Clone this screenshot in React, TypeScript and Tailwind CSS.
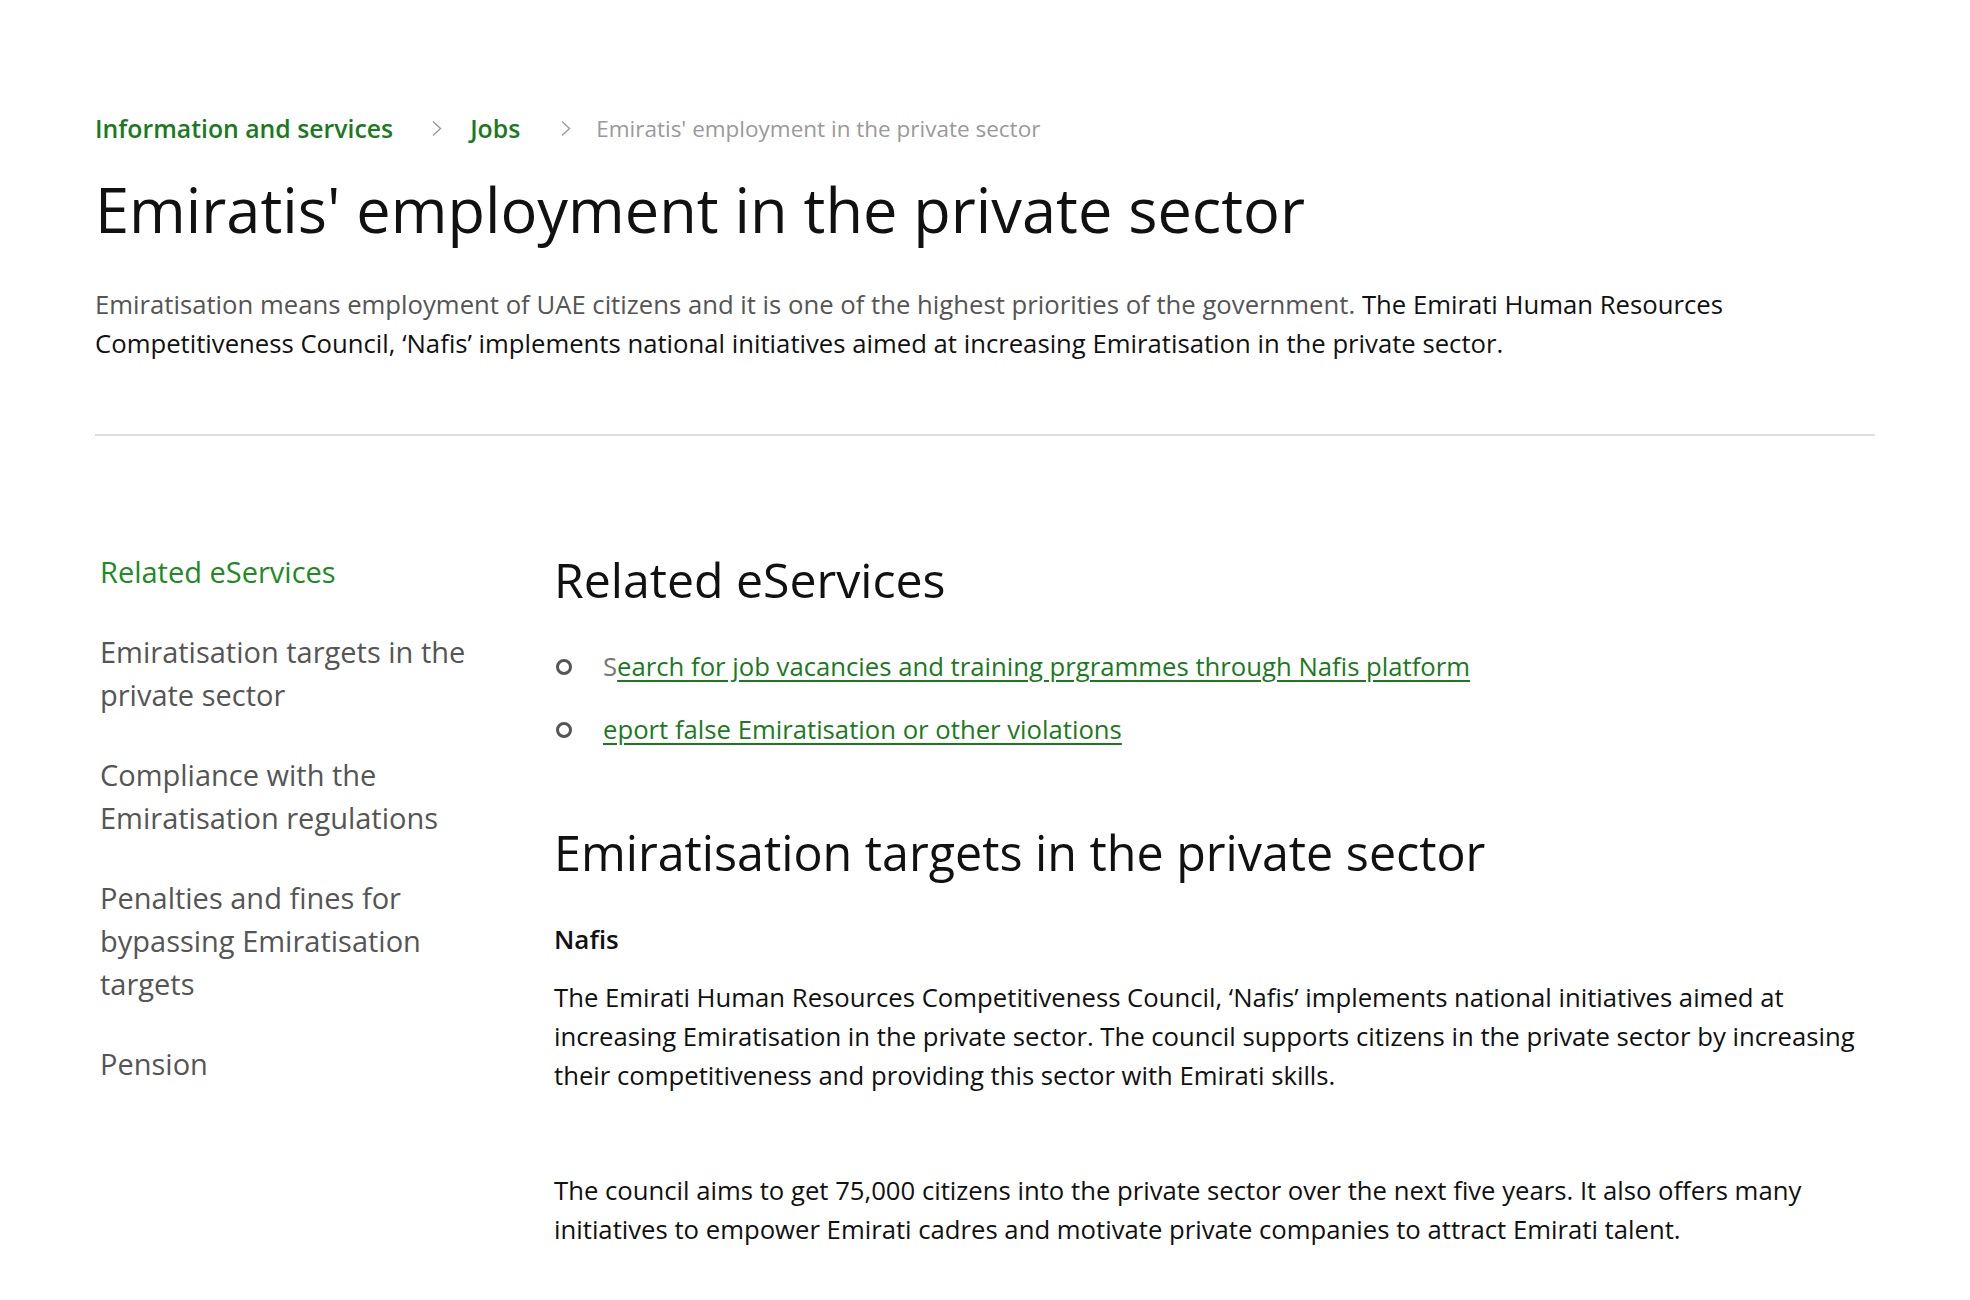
import React from "react";

const Chevron = () => (
  <svg width="12" height="17" viewBox="0 0 12 17" fill="none" className="shrink-0">
    <path d="M2 1.5 L9.5 8.5 L2 15.5" stroke="#9a9a9a" strokeWidth="1.4" />
  </svg>
);

export default function App() {
  const sideItems = [
    "Emiratisation targets in the private sector",
    "Compliance with the Emiratisation regulations",
    "Penalties and fines for bypassing Emiratisation targets",
    "Pension",
  ];
  return (
    <div
      className="min-h-[1300px] bg-white px-[95px] pt-[112px] text-[#111]"
      style={{ fontFamily: '"Open Sans", "Noto Sans", sans-serif' }}
    >
      <nav className="flex items-center leading-[33px]">
        <span className="text-[24.8px] font-semibold text-[#1b7a1e]">Information and services</span>
        <span className="ml-[38px] mr-[27px] flex items-center">
          <Chevron />
        </span>
        <span className="text-[24.8px] font-semibold text-[#1b7a1e]">Jobs</span>
        <span className="ml-[40px] mr-[24px] flex items-center">
          <Chevron />
        </span>
        <span className="text-[22.5px] text-[#9a9a9a]">Emiratis' employment in the private sector</span>
      </nav>

      <h1 className="mt-[29px] text-[61.3px] font-medium leading-[70px] text-[#111]">
        Emiratis' employment in the private sector
      </h1>

      <div className="mt-[41px] text-[25.7px] leading-[39px]">
        <span className="text-[#555]">
          Emiratisation means employment of UAE citizens and it is one of the highest priorities of the
          government.{" "}
        </span>
        <span className="text-[#111]">
          The Emirati Human Resources Competitiveness Council, ‘Nafis’ implements national initiatives aimed
          at increasing Emiratisation in the private sector.
        </span>
      </div>

      <div className="mt-[71px] h-[2px] bg-[#dedede]" />

      <div className="mt-[114px] flex">
        <aside className="w-[459px] shrink-0 pl-[5px]">
          <ul className="flex w-[395px] flex-col gap-[37px] text-[29px] leading-[43px] text-[#555]">
            <li className="text-[#208a24]">Related eServices</li>
            {sideItems.map((s) => (
              <li key={s}>{s}</li>
            ))}
          </ul>
        </aside>

        <main className="min-w-0 flex-1">
          <h2 className="text-[48.2px] font-medium leading-[58px] text-[#111]">Related eServices</h2>
          <ul className="mt-[39px] flex flex-col gap-[24px] text-[25.7px] leading-[39px]">
            <li className="flex items-center">
              <span className="ml-[2px] mr-[31px] h-[16px] w-[16px] shrink-0 rounded-full border-[3px] border-[#555]" />
              <span>
                <span className="text-[#777]">S</span>
                <a className="text-[#1b7a1e] underline underline-offset-[4px]" href="#">
                  earch for job vacancies and training prgrammes through Nafis platform
                </a>
              </span>
            </li>
            <li className="flex items-center">
              <span className="ml-[2px] mr-[31px] h-[16px] w-[16px] shrink-0 rounded-full border-[3px] border-[#555]" />
              <a className="text-[#1b7a1e] underline underline-offset-[4px]" href="#">
                eport false Emiratisation or other violations
              </a>
            </li>
          </ul>

          <h2 className="mt-[74px] text-[48.4px] font-medium leading-[58px] text-[#111]">
            Emiratisation targets in the private sector
          </h2>

          <h3 className="mt-[39px] text-[26px] font-semibold leading-[39px] text-[#111]">Nafis</h3>

          <p className="mt-[19px] text-[25.7px] leading-[39px] text-[#111]">
            The Emirati Human Resources Competitiveness Council, ‘Nafis’ implements national initiatives aimed at
            increasing Emiratisation in the private sector. The council supports citizens in the private sector
            by increasing their competitiveness and providing this sector with Emirati skills.
          </p>

          <p className="mt-[76px] text-[25.7px] leading-[39px] text-[#111]">
            The council aims to get 75,000 citizens into the private sector over the next five years. It also
            offers many initiatives to empower Emirati cadres and motivate private companies to attract Emirati
            talent.
          </p>
        </main>
      </div>
    </div>
  );
}
